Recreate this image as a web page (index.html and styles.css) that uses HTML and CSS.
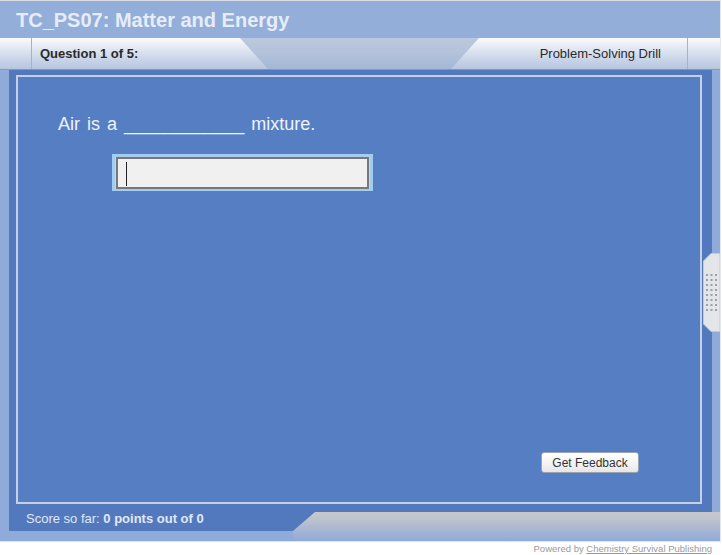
FILE: index.html
```html
<!DOCTYPE html>
<html lang="en">
<head>
    <meta charset="UTF-8">
    <title>TC_PS07: Matter and Energy</title>
    <link rel="stylesheet" href="styles.css">
</head>
<body>
    <div class="app">
        <header class="title-bar">TC_PS07: Matter and Energy</header>

        <div class="tabs">
            <div class="tab-stub"></div>
            <div class="tab tab-left">Question 1 of 5:</div>
            <div class="tab-gap"></div>
            <div class="tab tab-right">Problem-Solving Drill</div>
            <div class="tab-stub stub-end"></div>
        </div>

        <div class="stage">
            <div class="panel">
                <p class="question">Air is a <span class="blank">____________</span> mixture.</p>
                <div class="answer">
                    <div class="answer-field"><span class="caret"></span></div>
                </div>
                <button class="feedback-btn">Get Feedback</button>
            </div>
            <div class="score">Score so far:&nbsp;<b>0 points out of 0</b></div>
        </div>

        <div class="bottom-band"></div>

        <div class="handle">
            <svg width="17" height="79" viewBox="0 0 17 79">
                <polygon points="8,0.5 17,0.5 17,78.5 8,78.5 0.5,71 0.5,8" fill="#e3e5e9" stroke="#c4c9d2"/>
                <g fill="#9a9fa8">
                    <rect x="3" y="21" width="2" height="2"/><rect x="7.5" y="21" width="2" height="2"/><rect x="12" y="21" width="2" height="2"/>
                    <rect x="3" y="26" width="2" height="2"/><rect x="7.5" y="26" width="2" height="2"/><rect x="12" y="26" width="2" height="2"/>
                    <rect x="3" y="31" width="2" height="2"/><rect x="7.5" y="31" width="2" height="2"/><rect x="12" y="31" width="2" height="2"/>
                    <rect x="3" y="36" width="2" height="2"/><rect x="7.5" y="36" width="2" height="2"/><rect x="12" y="36" width="2" height="2"/>
                    <rect x="3" y="41" width="2" height="2"/><rect x="7.5" y="41" width="2" height="2"/><rect x="12" y="41" width="2" height="2"/>
                    <rect x="3" y="46" width="2" height="2"/><rect x="7.5" y="46" width="2" height="2"/><rect x="12" y="46" width="2" height="2"/>
                    <rect x="3" y="51" width="2" height="2"/><rect x="7.5" y="51" width="2" height="2"/><rect x="12" y="51" width="2" height="2"/>
                    <rect x="3" y="56" width="2" height="2"/><rect x="7.5" y="56" width="2" height="2"/><rect x="12" y="56" width="2" height="2"/>
                </g>
            </svg>
        </div>
    </div>

    <footer class="powered">Powered by <a href="#">Chemistry Survival Publishing</a></footer>
</body>
</html>
```

FILE: styles.css
```css
* {
    margin: 0;
    padding: 0;
    box-sizing: border-box;
}

body {
    font-family: 'Liberation Sans', Arial, sans-serif;
    background: #ffffff;
    width: 722px;
}

.app {
    position: relative;
    width: 721px;
    background: #8fabd9;
    border-top: 1px solid #d6dbe4;
    border-bottom: 1px solid #dde2ea;
    border-right: 1px solid #e4e7ec;
}

.title-bar {
    height: 37px;
    line-height: 38px;
    padding-left: 16px;
    background: #93aed9;
    color: #e6edf8;
    font-size: 20px;
    font-weight: bold;
}

/* tab strip */
.tabs {
    display: flex;
    height: 32px;
    background: linear-gradient(to bottom, #bcc8dc 0%, #b3c1da 50%, #a4b7d6 100%);
    border-bottom: 1px solid #7f98c6;
}

.tab-stub,
.tab {
    background: linear-gradient(to bottom, #fafbfd 0%, #e8edf5 25%, #d6dfee 50%, #c5d1e6 75%, #b7c6df 100%);
}

.tab-stub {
    width: 32px;
    border-right: 1px solid #a3b3cc;
}

.stub-end {
    width: 33px;
    border-right: none;
    border-left: 1px solid #a3b3cc;
}

.tab {
    font-size: 13px;
    line-height: 32px;
    color: #2a2a2a;
}

.tab-left {
    width: 236px;
    padding-left: 8px;
    font-weight: bold;
    clip-path: polygon(0 0, 208px 0, 100% 100%, 0 100%);
}

.tab-gap {
    flex: 1;
}

.tab-right {
    width: 236px;
    padding-right: 26px;
    text-align: right;
    clip-path: polygon(28px 0, 100% 0, 100% 100%, 0 100%);
}

/* main area */
.stage {
    margin: 0 8px 0 9px;
    padding-top: 5px;
    background: #5279be;
}

.panel {
    display: flex;
    flex-direction: column;
    height: 429px;
    margin: 0 10px 0 7px;
    background: #567fc3;
    border: 2px solid #c6d0e3;
}

.question {
    margin: 37px 0 0 40px;
    font-size: 18px;
    line-height: 21px;
    word-spacing: 2px;
    color: #eef2fa;
}

.answer {
    width: 261px;
    height: 37px;
    margin: 19px 0 0 94px;
    padding: 0 1px;
    border: 3px solid #a2cdf1;
    border-bottom-width: 2px;
    background: #b8d8f4;
}

.answer-field {
    height: 100%;
    padding: 3px 0 0 8px;
    background: #f0f0f0;
    border: 2px solid #787878;
}

.caret {
    display: block;
    width: 1px;
    height: 24px;
    background: #222;
}

.feedback-btn {
    align-self: flex-end;
    width: 98px;
    height: 21px;
    margin: auto 61px 29px 0;
    font-family: 'Liberation Sans', Arial, sans-serif;
    font-size: 12px;
    color: #333;
    background: linear-gradient(to bottom, #ffffff 0%, #f3f3f3 60%, #e6e6e6 100%);
    border: 1px solid #9aa3b3;
    border-radius: 3px;
}

.score {
    display: flex;
    align-items: center;
    height: 27px;
    padding: 1px 0 0 17px;
    font-size: 13px;
    color: #e1e8f4;
}

.bottom-band {
    position: relative;
    height: 29px;
    margin: -19px 0 0 293px;
    background: linear-gradient(to bottom, #c7c8cd 0%, #bec3cc 25%, #afbad0 50%, #9eb2d5 75%, #8fabd9 100%);
    clip-path: polygon(22px 0, 100% 0, 100% 100%, 0 100%, 0 19px);
}

.handle {
    position: absolute;
    top: 252px;
    right: 0;
    width: 17px;
    height: 79px;
}

.handle svg {
    display: block;
}

.powered {
    padding-right: 10px;
    text-align: right;
    font-size: 9.5px;
    line-height: 13px;
    color: #9a9a9a;
}

.powered a {
    color: #9a9a9a;
}
```
